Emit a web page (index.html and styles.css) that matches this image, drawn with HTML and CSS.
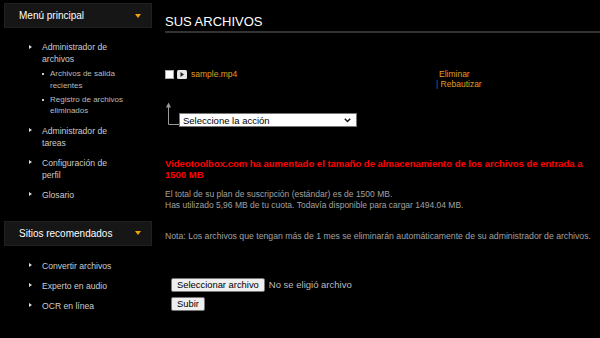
FILE: index.html
```html
<!DOCTYPE html>
<html lang="es">

<head>
    <meta charset="UTF-8">
    <meta name="viewport" content="width=device-width, initial-scale=1.0">
    <title>Sus archivos</title>
    <link rel="stylesheet" href="styles.css">
</head>

<body>

    <div class="page">
        <aside class="sidebar">
            <div class="box-title">Menú principal <span class="caret"></span></div>
            <ul class="menu">
                <li>Administrador de archivos
                    <ul class="submenu">
                        <li>Archivos de salida recientes</li>
                        <li>Registro de archivos eliminados</li>
                    </ul>
                </li>
                <li>Administrador de tareas</li>
                <li>Configuración de perfil</li>
                <li>Glosario</li>
            </ul>

            <div class="box-title">Sitios recomendados <span class="caret"></span></div>
            <ul class="menu menu-sites">
                <li>Convertir archivos</li>
                <li>Experto en audio</li>
                <li>OCR en línea</li>
            </ul>
        </aside>

        <main class="content">
            <h1>SUS ARCHIVOS</h1>

            <div class="file-row">
                <div class="file-name">
                    <span class="check"></span>
                    <svg class="play" width="10" height="9" viewBox="0 0 10 9">
                        <rect x="0" y="0" width="10" height="9" rx="1.5" fill="#e6e6e6" />
                        <path d="M3.5 2 L7 4.5 L3.5 7 Z" fill="#222" />
                    </svg>
                    <a href="#">sample.mp4</a>
                </div>
                <div class="file-actions">
                    <a href="#" class="first">Eliminar</a><br>
                    <span class="sep">|</span> <a href="#">Rebautizar</a>
                </div>
            </div>

            <div class="bulk">
                <svg class="arrow" width="14" height="24" viewBox="0 0 14 24">
                    <path d="M3.5 4 V22.5 H14" fill="none" stroke="#999" stroke-width="1" />
                    <path d="M1 5.5 L3.5 0.5 L6 5.5 Z" fill="#999" />
                </svg>
                <span class="select-wrap">
                    <select class="action">
                        <option>Seleccione la acción</option>
                        <option>Eliminar seleccionados</option>
                    </select>
                    <svg class="chevron" width="7" height="5" viewBox="0 0 7 5">
                        <path d="M0.8 0.8 L3.5 3.6 L6.2 0.8" fill="none" stroke="#111" stroke-width="1.4" />
                    </svg>
                </span>
            </div>

            <p class="notice">Videotoolbox.com ha aumentado el tamaño de almacenamiento de los archivos de entrada a 1500 MB</p>

            <p class="quota">El total de su plan de suscripción (estándar) es de 1500 MB.<br>
                Has utilizado 5,96 MB de tu cuota. Todavía disponible para cargar 1494.04 MB.</p>

            <p class="note">Nota: Los archivos que tengan más de 1 mes se eliminarán automáticamente de su administrador de archivos.</p>

            <form class="upload">
                <div class="file-pick">
                    <button type="button">Seleccionar archivo</button>
                    <span>No se eligió archivo</span>
                </div>
                <button type="button">Subir</button>
            </form>
        </main>
    </div>

</body>

</html>
```

FILE: styles.css
```css
body {
    margin: 0;
    background-color: #000;
    font-family: "Liberation Sans", Arial, sans-serif;
    color: #ccc;
}

.page {
    display: flex;
    align-items: flex-start;
}

/* Menu lateral */
.sidebar {
    width: 148px;
    margin: 3px 0 0 4px;
    flex-shrink: 0;
}

.box-title {
    display: flex;
    justify-content: space-between;
    align-items: center;
    height: 25px;
    box-sizing: border-box;
    padding: 0 10px 0 14px;
    background-color: #161616;
    border: 1px solid #202020;
    color: #fff;
    font-size: 10px;
}

.caret {
    width: 0;
    height: 0;
    border-left: 3px solid transparent;
    border-right: 3px solid transparent;
    border-top: 4px solid #f0a30a;
}

.menu {
    list-style: none;
    margin: 0 0 20px 0;
    padding: 13px 30px 0 25px;
    font-size: 8.6px;
    line-height: 12px;
}

.menu > li {
    display: grid;
    grid-template-columns: 13px 1fr;
    margin-bottom: 8px;
}

.menu > li::before {
    content: "";
    width: 0;
    height: 0;
    margin-top: 3.5px;
    border-left: 3px solid #ddd;
    border-top: 2.5px solid transparent;
    border-bottom: 2.5px solid transparent;
}

.menu-sites {
    padding-top: 14px;
}

.submenu {
    grid-column: 2;
    list-style: none;
    margin: 3px -8px 0 0;
    padding: 0;
    font-size: 8px;
    line-height: 11.5px;
    color: #bbb;
}

.submenu li {
    display: grid;
    grid-template-columns: 8px 1fr;
    margin-bottom: 2.5px;
}

.submenu li:last-child {
    margin-bottom: 0;
}

.submenu li::before {
    content: "";
    width: 2px;
    height: 2px;
    margin-top: 5px;
    background-color: #ccc;
}

/* Conteudo */
.content {
    flex: 1;
    margin-left: 13px;
}

h1 {
    margin: 14px 0 0 0;
    padding-bottom: 1px;
    font-size: 13px;
    font-weight: normal;
    line-height: 16px;
    color: #fff;
    border-bottom: 2px solid #333;
}

a {
    color: #e39b1c;
    text-decoration: none;
}

.file-row {
    display: grid;
    grid-template-columns: 271px auto;
    margin-top: 36px;
    font-size: 8.5px;
    line-height: 10px;
}

.file-name {
    display: flex;
    align-items: center;
    height: 10px;
}

.check {
    width: 7px;
    height: 7px;
    background-color: #fff;
    border: 1px solid #aaa;
    margin-right: 3px;
}

.play {
    margin-right: 4px;
}

.file-actions .first {
    margin-left: 3px;
}

.sep {
    color: #4a6a8c;
}

.bulk {
    display: flex;
    align-items: flex-end;
    margin-top: 14px;
    height: 24px;
}

.arrow {
    display: block;
    margin-bottom: 1px;
}

.select-wrap {
    position: relative;
    display: block;
    height: 14px;
}

.action {
    display: block;
    width: 178px;
    height: 14px;
    padding: 0 0 0 3px;
    font-family: "Liberation Sans", Arial, sans-serif;
    font-size: 9.5px;
    color: #000;
    background-color: #fff;
    border: 1px solid #767676;
    border-radius: 0;
    appearance: none;
    -webkit-appearance: none;
}

.chevron {
    position: absolute;
    right: 6px;
    top: 5px;
}

.notice {
    margin: 32px 12px 0 0;
    font-size: 9.5px;
    font-weight: bold;
    line-height: 10.5px;
    color: #ff0000;
}

.quota,
.note {
    font-size: 8.5px;
    line-height: 10.5px;
    color: #a0a0a0;
}

.quota {
    margin: 9px 0 0 0;
}

.note {
    margin: 21px 0 0 0;
    font-size: 8.7px;
}

.upload {
    display: flex;
    flex-direction: column;
    align-items: flex-start;
    gap: 5px;
    margin: 36px 0 0 6px;
}

.file-pick {
    display: flex;
    align-items: center;
    gap: 4px;
}

.file-pick span {
    font-size: 9.5px;
    color: #bbb;
}

button {
    height: 14px;
    padding: 0 5px;
    font-family: "Liberation Sans", Arial, sans-serif;
    font-size: 9.4px;
    line-height: 12px;
    color: #000;
    background-color: #efefef;
    border: 1px solid #767676;
    border-radius: 2px;
}
```
